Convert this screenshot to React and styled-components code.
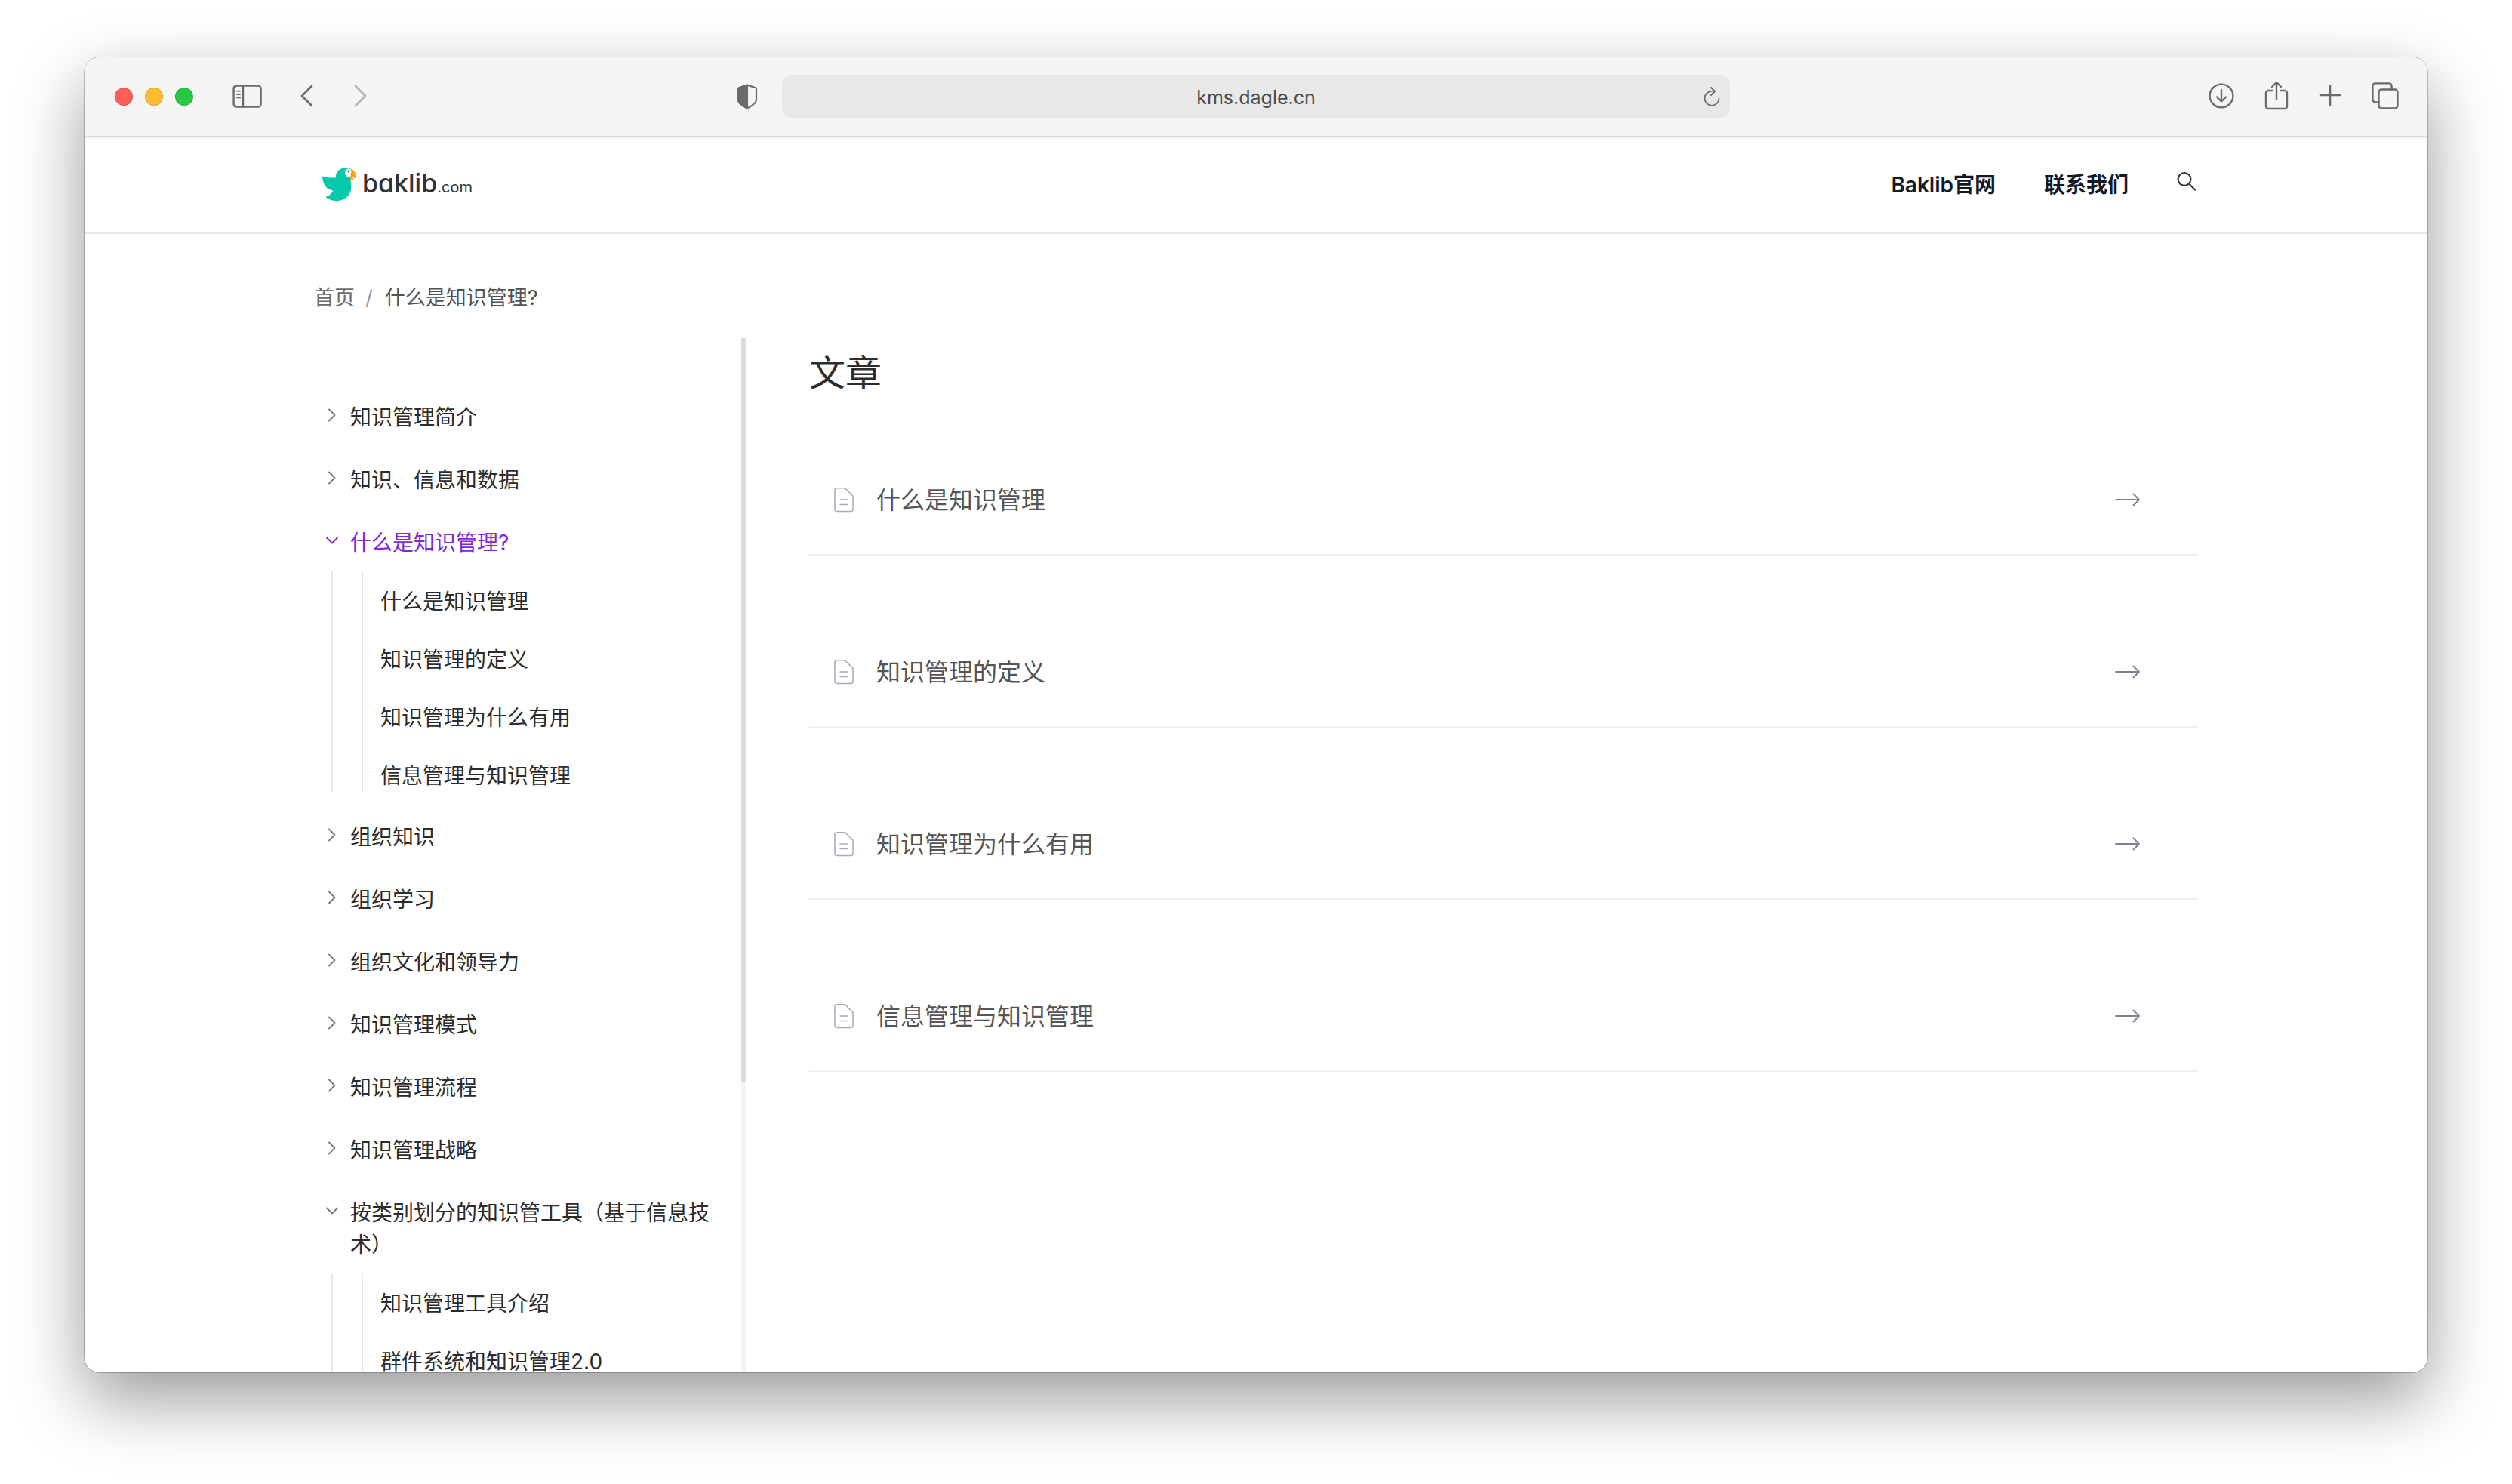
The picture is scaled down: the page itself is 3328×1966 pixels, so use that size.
import React from "react";
import styled, { createGlobalStyle } from "styled-components";

const GlobalStyle = createGlobalStyle`
  * { box-sizing: border-box; }
  body {
    margin: 0;
    background: #fff;
    font-family: Inter, "Noto Sans CJK SC", sans-serif;
    color: #2c2c2c;
  }
  button, input { font: inherit; color: inherit; }
  button { border: 0; padding: 0; background: none; cursor: pointer; }
  a { color: inherit; text-decoration: none; }
  ul, ol { list-style: none; margin: 0; padding: 0; }
  svg { display: block; flex: none; }
`;

const Desktop = styled.div`
  height: 100vh;
  padding: 76px 112px 148px;
`;

const Window = styled.div`
  display: flex;
  flex-direction: column;
  height: 100%;
  overflow: hidden;
  border-radius: 20px;
  background: #fff;
  box-shadow: 0 0 0 1px rgba(0, 0, 0, 0.22), 0 36px 92px rgba(0, 0, 0, 0.4);
`;

const Toolbar = styled.div`
  display: grid;
  grid-template-columns: 1fr minmax(0, 1256px) 1fr;
  align-items: center;
  flex: none;
  height: 105px;
  background: #f5f5f5;
  border-bottom: 1px solid #dadada;
  box-shadow: 0 1px 4px rgba(0, 0, 0, 0.12);
  color: #6b6b6b;
`;

const ToolbarLeft = styled.div`
  display: flex;
  align-items: center;
  padding: 0 32px 0 40px;
`;

const ToolbarRight = styled.div`
  display: flex;
  align-items: center;
  justify-content: flex-end;
  gap: 40px;
  padding: 0 38px 2px 0;
`;

const Lights = styled.div`
  display: flex;
  gap: 16px;
  margin-right: 52px;
`;

const Light = styled.button`
  width: 24px;
  height: 24px;
  border-radius: 50%;
  background: ${(p) => p.$color};
  box-shadow: inset 0 0 0 1px rgba(0, 0, 0, 0.12);
`;

const History = styled.div`
  display: flex;
  gap: 52px;
  margin: 0 auto 0 48px;
`;

const ToolButton = styled.button`
  color: ${(p) => (p.$faded ? "#b5b5b5" : "inherit")};
`;

const AddressBar = styled.form`
  display: flex;
  align-items: center;
  height: 56px;
  padding-right: 12px;
  padding-left: 36px;
  border-radius: 12px;
  background: #e8e8e8;
`;

const AddressInput = styled.input`
  flex: 1;
  min-width: 0;
  border: 0;
  outline: 0;
  padding: 2px 0 0;
  background: none;
  text-align: center;
  font-size: 25px;
  line-height: 42px;
  color: #4a4a4a;
`;

const SiteHeader = styled.header`
  flex: none;
  border-bottom: 2px solid #e5e7eb;
`;

const HeaderInner = styled.div`
  display: flex;
  align-items: center;
  justify-content: space-between;
  width: 100%;
  max-width: 2496px;
  height: 127px;
  margin: 0 auto;
`;

const Logo = styled.a`
  display: flex;
  align-items: center;
  gap: 8px;
  padding-left: 11px;
  color: #333;
`;

const Wordmark = styled.span`
  padding-top: 2px;
  font-size: 34px;
  line-height: 42px;
  font-weight: 500;
  font-feature-settings: "cv11";
`;

const WordmarkSuffix = styled.span`
  font-size: 20px;
  font-weight: 400;
`;

const Nav = styled.nav`
  display: flex;
  align-items: center;
  gap: 64px;
  padding-right: 2px;
  font-size: 28px;
  line-height: 42px;
  font-weight: 600;
  color: #111827;
`;

const Page = styled.div`
  display: flex;
  flex-direction: column;
  flex: 1;
  min-height: 0;
  width: 100%;
  max-width: 2496px;
  margin: 0 auto;
  padding-top: 64px;
`;

const Breadcrumb = styled.ol`
  display: flex;
  flex: none;
  gap: 14px;
  margin-bottom: 32px;
  font-size: 27px;
  line-height: 42px;
`;

const Crumb = styled.li`
  color: ${(p) => (p.$current ? "#525252" : "#6b6b6b")};
`;

const Slash = styled.span`
  margin-right: 16px;
  color: #999;
`;

const Columns = styled.div`
  display: flex;
  gap: 84px;
  flex: 1;
  min-height: 0;
`;

const Sidebar = styled.aside`
  display: flex;
  flex: none;
  width: 572px;
  overflow: hidden;
`;

const Tree = styled.ul`
  display: flex;
  flex-direction: column;
  gap: 24px;
  flex: 1;
  padding: 84px 28px 0 16px;
  font-size: 28px;
  line-height: 42px;
`;

const ScrollTrack = styled.div`
  width: 6px;
  background: #f5f5f5;
`;

const ScrollThumb = styled.div`
  height: 72%;
  background: #dcdcdc;
`;

const TreeToggle = styled.button`
  display: flex;
  align-items: flex-start;
  gap: 16px;
  width: 100%;
  padding-bottom: 17px;
  text-align: left;
  color: ${(p) => (p.$active ? "#8427d6" : "#2c2c2c")};
`;

const Chevron = styled.svg`
  margin-top: 9px;
  color: ${(p) => (p.$active ? "#8427d6" : "#777")};
`;

const Branch = styled.div`
  margin: 0 0 15px 7px;
  padding-left: 38px;
  border-left: 2px solid #e8e8e8;
`;

const BranchList = styled.ul`
  display: flex;
  flex-direction: column;
  gap: 35px;
  padding: 19px 0 0 23px;
  border-left: 2px solid #e8e8e8;
`;

const Main = styled.main`
  flex: 1;
  min-width: 0;
`;

const Title = styled.h1`
  margin: 10px 0 60px;
  font-size: 48px;
  line-height: 72px;
  font-weight: 400;
`;

const Articles = styled.ul`
  display: flex;
  flex-direction: column;
  gap: 82px;
`;

const ArticleLink = styled.a`
  display: flex;
  align-items: center;
  height: 146px;
  padding: 0 76px 0 32px;
  border-bottom: 2px solid #f0f0f0;
  font-size: 32px;
  line-height: 48px;
  color: #555;
`;

const ArticleName = styled.span`
  flex: 1;
  padding: 2px 0 0 29px;
`;

const stroke = {
  fill: "none",
  stroke: "currentColor",
  strokeLinecap: "round",
  strokeLinejoin: "round",
  "aria-hidden": true,
};

const PanelIcon = () => (
  <svg width="40" height="32" viewBox="0 0 40 32" {...stroke} strokeWidth="2.4">
    <rect x="1.6" y="1.6" width="36" height="28" rx="3.6" />
    <path d="M14 1.6v28" />
    <path d="M6 8.6h4M6 13h4M6 17.4h4" strokeWidth="1.8" />
  </svg>
);

const BackIcon = () => (
  <svg width="20" height="32" viewBox="0 0 20 32" {...stroke} strokeWidth="2.8">
    <path d="M17 2 4 15l13 13" />
  </svg>
);

const ForwardIcon = () => (
  <svg width="20" height="32" viewBox="0 0 20 32" {...stroke} strokeWidth="2.8">
    <path d="m3 2 13 13L3 28" />
  </svg>
);

const ShieldIcon = () => (
  <svg width="28" height="34" viewBox="0 0 28 34" {...stroke} strokeWidth="2.2">
    <path d="M14 1.6 25 5.2c.8.3 1 .8 1 1.5V21c0 5-6 8.6-12 11.600C8 29.600 2 26 2 21V6.700c0-.7.2-1.200 1-1.500z" />
    <path d="M14 1.600v31C8 29.600 2 26 2 21V6.700c0-.7.2-1.200 1-1.500z" fill="currentColor" />
  </svg>
);

const ReloadIcon = () => (
  <svg width="24" height="28" viewBox="0 0 24 28" {...stroke} strokeWidth="1.8">
    <path d="M12.500 6.800A9.500 9.500 0 1 0 21.500 16.500" />
    <path d="m11 2 5 5-5 5" />
  </svg>
);

const DownloadIcon = () => (
  <svg width="34" height="34" viewBox="0 0 34 34" {...stroke} strokeWidth="2.400">
    <circle cx="17" cy="17" r="15.400" />
    <path d="M17 9v15M11 18.500l6 6 6-6" />
  </svg>
);

const ShareIcon = () => (
  <svg width="32" height="40" viewBox="0 0 32 40" {...stroke} strokeWidth="2.400">
    <path d="M10.500 13H5a3 3 0 0 0-3 3v18a3 3 0 0 0 3 3h22a3 3 0 0 0 3-3V16a3 3 0 0 0-3-3h-5.500" />
    <path d="M16 24.500V2M10 8l6-6 6 6" />
  </svg>
);

const PlusIcon = () => (
  <svg width="30" height="30" viewBox="0 0 30 30" {...stroke} strokeWidth="2.600">
    <path d="M15 1v26M2 14h26" />
  </svg>
);

const TabsIcon = () => (
  <svg width="36" height="36" viewBox="0 0 36 36" {...stroke} strokeWidth="2.400">
    <rect x="9.500" y="9.500" width="25" height="25" rx="3.600" />
    <path d="M9.500 26.500H5a3.600 3.600 0 0 1-3.600-3.600V5A3.600 3.600 0 0 1 5 1.400h18A3.600 3.600 0 0 1 26.600 5v4.500" />
  </svg>
);

const SearchIcon = () => (
  <svg width="26" height="36" viewBox="0 0 26 36" {...stroke} stroke="#333" strokeWidth="2.200">
    <circle cx="10" cy="10.500" r="8.400" />
    <path d="m16 16.500 8 8" />
  </svg>
);

const BirdIcon = () => (
  <svg width="45" height="45" viewBox="0 0 45 45" aria-hidden="true">
    <path
      fill="#04caab"
      d="M0 11.500c6 1.800 11.500 2.200 17.600 1.900C17.800 5.500 23.500.2 31 .2c5 0 8.200 1.600 9 4.300-.5 4-2.300 8.500-2.400 12.500-.1 3.500.9 5.500.8 9.500C38 36.500 29.500 44.200 18.500 44.200c-6 0-10.500-2-14-5.200 4.500-1.600 8-4.500 9.800-8.500C5.500 29.500.5 21.500 0 11.500z"
    />
    <ellipse cx="34.600" cy="7" rx="4.700" ry="5.700" fill="#fff" />
    <circle cx="35" cy="5" r="1.300" fill="#222" />
    <path fill="#ffa30d" d="M39.600 2.600c3.400 2 5.300 6 4.600 10.400-.2 1.300-.6 1.600-1.300.9-1.300-1.400-3-2.100-5.500-2.200.1-3.200.8-6.400 2.200-9.100z" />
    <path fill="#ffa30d" d="M36.800 13c2.200-.1 4 .6 5 2-1.300 1.400-3.200 1.600-4.900.8z" />
  </svg>
);

const FileIcon = () => (
  <svg width="28" height="34" viewBox="0 0 28 34" {...stroke} stroke="#a5abbd" strokeWidth="1.500">
    <path d="M5 1.800h10.500L26 12.300V29.500a3 3 0 0 1-3 3H5a3 3 0 0 1-3-3V4.800a3 3 0 0 1 3-3z" />
    <path d="M9 17h10M9 23.500h10" />
  </svg>
);

const ArrowIcon = () => (
  <svg width="34" height="18" viewBox="0 0 34 18" {...stroke} stroke="#7b7f8e" strokeWidth="1.800">
    <path d="M1 9h31M24.500 1.500 32 9l-7.500 7.500" />
  </svg>
);

const categories = [
  { name: "知识管理简介" },
  { name: "知识、信息和数据" },
  {
    name: "什么是知识管理?",
    active: true,
    children: ["什么是知识管理", "知识管理的定义", "知识管理为什么有用", "信息管理与知识管理"],
  },
  { name: "组织知识" },
  { name: "组织学习" },
  { name: "组织文化和领导力" },
  { name: "知识管理模式" },
  { name: "知识管理流程" },
  { name: "知识管理战略" },
  {
    name: "按类别划分的知识管工具（基于信息技术）",
    children: ["知识管理工具介绍", "群件系统和知识管理2.0"],
  },
];

const articles = categories[2].children;

function Category({ name, active, children }) {
  const open = Boolean(children);
  return (
    <li>
      <TreeToggle type="button" aria-expanded={open} $active={active}>
        <Chevron
          {...stroke}
          width="16"
          height="18"
          viewBox="0 0 16 18"
          strokeWidth="1.800"
          $active={active}
        >
          <path d={open ? "m1 5.500 7 7 7-7" : "m4 1.500 7.500 7.500L4 16.500"} />
        </Chevron>
        <span>{name}</span>
      </TreeToggle>
      {open && (
        <Branch>
          <BranchList>
            {children.map((child) => (
              <li key={child}>
                <a href="#">{child}</a>
              </li>
            ))}
          </BranchList>
        </Branch>
      )}
    </li>
  );
}

export default function App() {
  return (
    <Desktop lang="zh-CN">
      <GlobalStyle />
      <Window>
        <Toolbar>
          <ToolbarLeft>
            <Lights>
              <Light type="button" aria-label="关闭" $color="#ff5f57" />
              <Light type="button" aria-label="最小化" $color="#febc2e" />
              <Light type="button" aria-label="缩放" $color="#28c840" />
            </Lights>
            <ToolButton type="button" aria-label="边栏"><PanelIcon /></ToolButton>
            <History>
              <ToolButton type="button" aria-label="后退"><BackIcon /></ToolButton>
              <ToolButton type="button" aria-label="前进" $faded><ForwardIcon /></ToolButton>
            </History>
            <ToolButton type="button" aria-label="隐私报告"><ShieldIcon /></ToolButton>
          </ToolbarLeft>
          <AddressBar>
            <AddressInput aria-label="地址" defaultValue="kms.dagle.cn" />
            <ToolButton type="button" aria-label="重新载入"><ReloadIcon /></ToolButton>
          </AddressBar>
          <ToolbarRight>
            <ToolButton type="button" aria-label="下载"><DownloadIcon /></ToolButton>
            <ToolButton type="button" aria-label="共享"><ShareIcon /></ToolButton>
            <ToolButton type="button" aria-label="新标签页"><PlusIcon /></ToolButton>
            <ToolButton type="button" aria-label="标签页概览"><TabsIcon /></ToolButton>
          </ToolbarRight>
        </Toolbar>

        <SiteHeader>
          <HeaderInner>
            <Logo href="#">
              <BirdIcon />
              <Wordmark>
                baklib<WordmarkSuffix>.com</WordmarkSuffix>
              </Wordmark>
            </Logo>
            <Nav>
              <a href="#">Baklib官网</a>
              <a href="#">联系我们</a>
              <ToolButton type="button" aria-label="搜索"><SearchIcon /></ToolButton>
            </Nav>
          </HeaderInner>
        </SiteHeader>

        <Page>
          <Breadcrumb>
            <Crumb><a href="#">首页</a></Crumb>
            <Crumb $current>
              <Slash>/</Slash>什么是知识管理?
            </Crumb>
          </Breadcrumb>
          <Columns>
            <Sidebar>
              <Tree>
                {categories.map((c) => (
                  <Category key={c.name} name={c.name} active={c.active}>
                    {c.children}
                  </Category>
                ))}
              </Tree>
              <ScrollTrack>
                <ScrollThumb />
              </ScrollTrack>
            </Sidebar>
            <Main>
              <Title>文章</Title>
              <Articles>
                {articles.map((name) => (
                  <li key={name}>
                    <ArticleLink href="#">
                      <FileIcon />
                      <ArticleName>{name}</ArticleName>
                      <ArrowIcon />
                    </ArticleLink>
                  </li>
                ))}
              </Articles>
            </Main>
          </Columns>
        </Page>
      </Window>
    </Desktop>
  );
}
